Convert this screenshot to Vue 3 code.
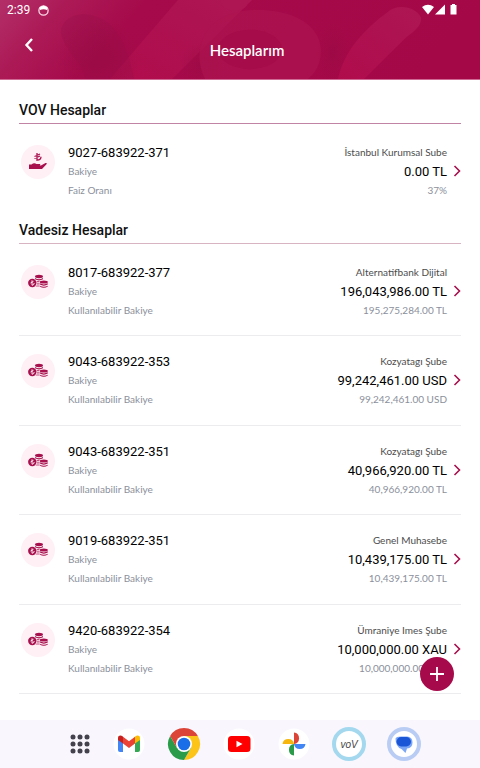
<script setup>
import { ref } from 'vue'

const vovAccounts = ref([
  {
    no: '9027-683922-371',
    branch: 'İstanbul Kurumsal Sube',
    balance: '0.00 TL',
    extraLabel: 'Faiz Oranı',
    extra: '37%'
  }
])

const demandAccounts = ref([
  { no: '8017-683922-377', branch: 'Alternatifbank Dijital', balance: '196,043,986.00 TL', extra: '195,275,284.00 TL' },
  { no: '9043-683922-353', branch: 'Kozyatagı Şube', balance: '99,242,461.00 USD', extra: '99,242,461.00 USD' },
  { no: '9043-683922-351', branch: 'Kozyatagı Şube', balance: '40,966,920.00 TL', extra: '40,966,920.00 TL' },
  { no: '9019-683922-351', branch: 'Genel Muhasebe', balance: '10,439,175.00 TL', extra: '10,439,175.00 TL' },
  { no: '9420-683922-354', branch: 'Ümraniye Imes Şube', balance: '10,000,000.00 XAU', extra: '10,000,000.00 XAU' }
])

const dots = [4, 11, 18]
</script>

<template>
  <div class="screen">
    <header class="top">
      <svg class="top-art" viewBox="0 0 480 80" preserveAspectRatio="none" aria-hidden="true">
        <defs>
          <linearGradient id="base" x1="0" y1="0" x2="1" y2="0.15">
            <stop offset="0" stop-color="#b32f68" />
            <stop offset="0.14" stop-color="#ac1a56" />
            <stop offset="0.3" stop-color="#a60a4a" />
            <stop offset="1" stop-color="#a50847" />
          </linearGradient>
          <linearGradient id="band" x1="0" y1="1" x2="1" y2="0">
            <stop offset="0" stop-color="#b00c4c" />
            <stop offset="1" stop-color="#ad1653" />
          </linearGradient>
          <radialGradient id="shade">
            <stop offset="0" stop-color="#960b42" stop-opacity="0.5" />
            <stop offset="1" stop-color="#960b42" stop-opacity="0" />
          </radialGradient>
        </defs>
        <rect width="480" height="80" fill="url(#base)" />
        <path d="M110 80 L178 0 H252 L172 80 Z" fill="url(#band)" />
        <path d="M61 34 C60 20 76 12 90 15 C112 20 126 36 134 80 H86 C82 64 64 50 61 34 Z" fill="#96104a" opacity="0.3" />
        <ellipse cx="98" cy="58" rx="42" ry="40" fill="url(#shade)" />
        <ellipse cx="205" cy="66" rx="26" ry="24" fill="url(#shade)" />
        <path d="M205 80 C190 50 205 12 252 10 C300 9 321 30 321 52 C321 66 314 75 308 80 Z" fill="#ad1450" opacity="0.7" />
        <ellipse cx="250" cy="50" rx="32" ry="20" fill="#a50c49" />
        <path d="M220 0 H247 C249 6 244 10 236 11 C228 11 220 7 220 0 Z" fill="#ad1653" />
        <ellipse cx="333" cy="54" rx="17" ry="32" fill="url(#shade)" />
        <path d="M338 80 C344 52 364 30 388 12 C396 4 416 6 421 18 C422 26 414 32 406 38 L364 80 Z" fill="url(#band)" />
      </svg>

      <div class="status">
        <span class="clock">2:39</span>
        <svg width="11" height="11" viewBox="0 0 11 11">
          <circle cx="5.5" cy="5.5" r="4.6" fill="none" stroke="#fbd9e6" stroke-width="1.3" />
          <path d="M1.5 2.5 Q5.5 -1 9.5 2.5 L9 5 Q5.5 3.5 2 5 Z" fill="#fff" />
        </svg>
        <svg class="signals" width="37" height="12" viewBox="0 0 37 12" fill="#fff">
          <path d="M0 3 Q6 -1.5 12 3 L6 10.5 Z" />
          <path d="M23 0.5 V10.5 H13 Z" />
          <path d="M28.5 1 H30 V0 H33 V1 H34.5 V10.5 H28.5 Z" />
        </svg>
      </div>

      <div class="title-bar">
        <button class="back" type="button" aria-label="Geri">
          <svg width="10" height="14" viewBox="0 0 10 14">
            <path d="M8 1 L2.5 7 L8 13" fill="none" stroke="#fff" stroke-width="2.4" />
          </svg>
        </button>
        <h1>Hesaplarım</h1>
      </div>
    </header>

    <main class="content">
      <h2>VOV Hesaplar</h2>
      <ul class="list">
        <li v-for="acc in vovAccounts" :key="acc.no" class="row">
          <span class="badge">
            <svg width="20" height="20" viewBox="0 0 20 20">
              <path d="M9 1 V8.2 Q13 8 13 4.8 M6.5 4.5 L12 2 M6.5 6.5 L12 4" fill="none" stroke="#a8104d" stroke-width="1.3" />
              <path d="M1 12.5 H3.5 Q6 10.5 8.5 12 H12 Q13 13 11.5 13.5 H13 L17.5 11 Q19.500 10.5 18.5 12.2 L14 17 H1 Z" fill="#a8104d" />
            </svg>
          </span>
          <div class="info">
            <strong>{{ acc.no }}</strong>
            <span>Bakiye</span>
            <span>{{ acc.extraLabel }}</span>
          </div>
          <div class="amounts">
            <span class="branch">{{ acc.branch }}</span>
            <strong>{{ acc.balance }}</strong>
            <span>{{ acc.extra }}</span>
          </div>
          <svg class="chevron" width="8" height="12" viewBox="0 0 8 12">
            <path d="M1.5 1 L6.5 6 L1.5 11" />
          </svg>
        </li>
      </ul>

      <h2 class="second">Vadesiz Hesaplar</h2>
      <ul class="list grow">
        <li v-for="acc in demandAccounts" :key="acc.no" class="row lined">
          <span class="badge">
            <svg width="20" height="20" viewBox="0 0 20 20" fill="#a8104d">
              <ellipse cx="11" cy="4.5" rx="4" ry="1.7" />
              <path d="M7 6 Q11 8.5 15 6 V7.3 Q11 9.5 7 7.3 Z" />
              <path d="M8.5 9 H11.5 V10.2 H9 Z M9 11.2 H11.5 V12.4 H9 Z M8.5 13.4 H11.5 V14.6 H7.5 Z" opacity="0.7" />
              <ellipse cx="15.8" cy="10" rx="4" ry="1.5" />
              <path d="M11.8 11.3 Q15.8 13.6 19.8 11.3 V12.6 Q15.8 14.8 11.8 12.6 Z" />
              <path d="M11.8 13.7 Q15.8 16 19.8 13.7 V14.5 Q15.8 17 11.8 14.5 Z" />
              <circle cx="4.3" cy="11" r="4.2" />
              <path d="M4 8.3 V13.3 Q6.2 13 6.2 11 M2.5 11 L5.5 9.3" fill="none" stroke="#fff" stroke-width="0.9" />
            </svg>
          </span>
          <div class="info">
            <strong>{{ acc.no }}</strong>
            <span>Bakiye</span>
            <span>Kullanılabilir Bakiye</span>
          </div>
          <div class="amounts">
            <span class="branch">{{ acc.branch }}</span>
            <strong>{{ acc.balance }}</strong>
            <span>{{ acc.extra }}</span>
          </div>
          <svg class="chevron" width="8" height="12" viewBox="0 0 8 12">
            <path d="M1.5 1 L6.5 6 L1.5 11" />
          </svg>
        </li>
      </ul>
    </main>

    <nav class="dock">
      <svg class="apps" viewBox="0 0 22 22" fill="#44424c">
        <template v-for="y in dots" :key="y">
          <circle v-for="x in dots" :key="x" :cx="x" :cy="y" r="2.5" />
        </template>
      </svg>
      <!-- Gmail -->
      <svg viewBox="0 0 34 34">
        <circle cx="17" cy="17" r="15.5" fill="#fff" />
        <path d="M6 12 L11 15.5 V25 H8 Q6 25 6 23 Z" fill="#4285f4" />
        <path d="M28 12 L23 15.5 V25 H26 Q28 25 28 23 Z" fill="#34a853" />
        <path d="M6 13 V11 C6 8.500 8.8 8 10.5 9.3 L11 9.7 V16.5 Z" fill="#c5221f" />
        <path d="M28 13 V11 C28 8.5 25.2 8 23.5 9.3 L23 9.7 V16.5 Z" fill="#fbbc04" />
        <path d="M11 9.7 L17 14.2 L23 9.7 V16.5 L17 21 L11 16.5 Z" fill="#ea4335" />
      </svg>
      <!-- Chrome -->
      <svg viewBox="0 0 34 34">
        <path d="M17 9 H30.86 A16 16 0 0 1 17 33 L23.93 21 Z" fill="#fcc418" />
        <path d="M3.14 9 A16 16 0 0 0 17 33 L23.93 21 H10.07 Z" fill="#2a9b49" />
        <path d="M3.14 9 A16 16 0 0 1 30.86 9 H17 L10.07 21 Z" fill="#dc4437" />
        <circle cx="17" cy="17" r="8" fill="#fff" />
        <circle cx="17" cy="17" r="6.3" fill="#1a6fe8" />
      </svg>
      <!-- YouTube -->
      <svg viewBox="0 0 34 34">
        <circle cx="17" cy="17" r="15.5" fill="#fff" />
        <rect x="6" y="9" width="22.5" height="16" rx="3.5" fill="#fe0000" />
        <path d="M14.5 13.8 L20.5 17 L14.5 20.2 Z" fill="#fff" />
      </svg>
      <!-- Photos -->
      <svg viewBox="0 0 34 34">
        <circle cx="17" cy="17" r="15.5" fill="#fff" />
        <path d="M17 5.5 A5.8 5.8 0 0 1 17 17 Z" fill="#dc4437" />
        <path d="M28.5 17 A5.8 5.8 0 0 1 17 17 Z" fill="#4285f4" />
        <path d="M17 28.5 A5.8 5.8 0 0 1 17 17 Z" fill="#2a9b49" />
        <path d="M5.5 17 A5.8 5.8 0 0 1 17 17 Z" fill="#f6b60d" />
      </svg>
      <!-- VOV -->
      <svg viewBox="0 0 34 34">
        <circle cx="17" cy="17" r="15" fill="#fff" stroke="#a4d8ee" stroke-width="4" />
        <text class="vov" x="17" y="21" text-anchor="middle">voV</text>
      </svg>
      <!-- Messages -->
      <svg viewBox="0 0 34 34">
        <circle cx="17" cy="17" r="15" fill="#fff" stroke="#b9cdf4" stroke-width="4" />
        <path d="M14 9.5 H20 Q25.5 10 25.5 15.5 Q25.5 21 20 21.5 L18.5 26 L14.5 22 Q8.5 20 8.5 11.5 Q9 9.5 14 9.5 Z" fill="#7ba6f5" />
        <rect x="9.5" y="10" width="14.5" height="9.5" rx="4.7" fill="#1a56d6" />
      </svg>
    </nav>

    <button class="fab" type="button" aria-label="Ekle">
      <svg width="16" height="16" viewBox="0 0 16 16">
        <path d="M8 1 V15 M1 8 H15" stroke="#fff" stroke-width="1.8" />
      </svg>
    </button>
  </div>
</template>

<style>
body {
  margin: 0;
  background: #fff;
}
</style>

<style scoped>
.screen {
  position: relative;
  display: flex;
  flex-direction: column;
  min-height: 100vh;
  font-family: Lato, "Noto Sans", sans-serif;
  color: #111;
  background: #fff;
}
.top {
  position: relative;
  box-sizing: border-box;
  height: 80px;
  border-bottom: 1px solid #cf6a95;
  color: #fff;
}
.top-art {
  position: absolute;
  inset: 0;
  width: 100%;
  height: 100%;
}
.status {
  position: relative;
  display: flex;
  align-items: center;
  gap: 8px;
  height: 20px;
  padding: 0 21px 0 7px;
}
.clock {
  font: 12px/20px Roboto, sans-serif;
}
.signals {
  margin-left: auto;
}
.title-bar {
  position: relative;
  display: grid;
  grid-template-columns: 1fr auto 1fr;
  padding: 15px 0 0 14px;
}
.back {
  display: flex;
  align-items: center;
  justify-content: center;
  width: 30px;
  height: 20px;
  padding: 0;
  border: 0;
  background: none;
}
h1 {
  margin: 5px 0 0;
  font-size: 15px;
  line-height: 20px;
  font-weight: 600;
}
.content {
  display: flex;
  flex: 1;
  flex-direction: column;
  padding: 20px 19px 26px;
}
h2 {
  margin: 0;
  padding-bottom: 3px;
  border-bottom: 1px solid #c284a4;
  font-family: Roboto, sans-serif;
  font-size: 14px;
  line-height: 20px;
  font-weight: 500;
}
.second {
  margin-top: 20px;
  border-color: #d8b4c2;
}
.list {
  display: flex;
  flex-direction: column;
  margin: 0;
  padding: 4px 0 0;
  list-style: none;
}
.grow {
  flex: 1;
  padding-top: 3px;
}
.row {
  display: flex;
  align-items: flex-start;
  padding: 15px 0 0 2px;
}
.lined {
  flex: 1;
  padding-top: 16px;
  padding-bottom: 15px;
  border-bottom: 1px solid #ececee;
}
.badge {
  display: flex;
  align-items: center;
  justify-content: center;
  width: 34px;
  height: 34px;
  margin: 2px 13px 0 0;
  border-radius: 50%;
  background: #fff0f5;
}
.info,
.amounts {
  display: flex;
  flex-direction: column;
  font-size: 10px;
  line-height: 19px;
  color: #8b909c;
}
.info {
  flex: 1;
}
.amounts {
  align-items: flex-end;
}
strong {
  font-family: Roboto, sans-serif;
  font-size: 13px;
  font-weight: 400;
  color: #000;
}
.branch {
  color: #4c4c4c;
}
.chevron {
  margin: 22px 0 0 6px;
  fill: none;
  stroke: #a8104d;
  stroke-width: 1.6;
}
.dock {
  display: flex;
  align-items: center;
  justify-content: center;
  gap: 21px;
  height: 48px;
  padding-left: 10px;
  background: #f9f6fe;
}
.dock svg {
  width: 34px;
  height: 34px;
}
.dock .apps {
  width: 22px;
  height: 22px;
}
.vov {
  font: italic 10px "Liberation Sans", sans-serif;
  fill: #444;
}
.fab {
  position: absolute;
  right: 26px;
  bottom: 77px;
  display: flex;
  align-items: center;
  justify-content: center;
  width: 34px;
  height: 34px;
  padding: 0;
  border: 0;
  border-radius: 50%;
  background: #a60a4a;
}
</style>
